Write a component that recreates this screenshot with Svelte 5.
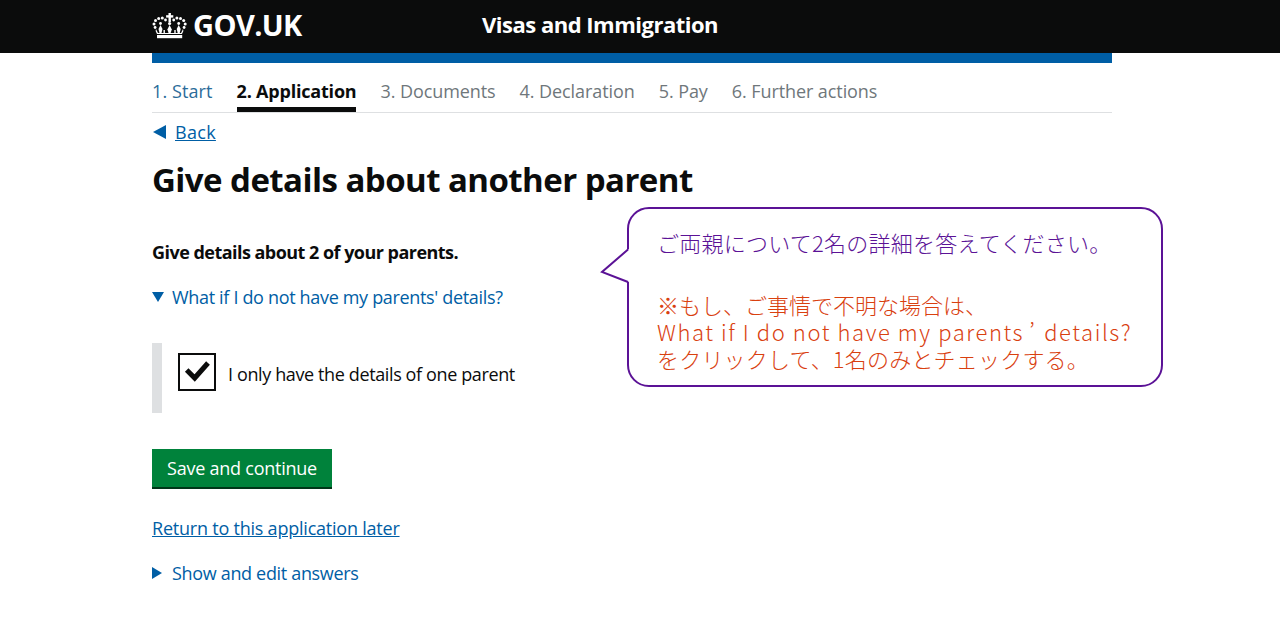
<script>
  const steps = [
    { label: '1. Start', state: 'done' },
    { label: '2. Application', state: 'current' },
    { label: '3. Documents', state: 'todo' },
    { label: '4. Declaration', state: 'todo' },
    { label: '5. Pay', state: 'todo' },
    { label: '6. Further actions', state: 'todo' }
  ];
</script>

<header class="topbar">
  <div class="wrap top-inner">
    <div class="logo">
      <svg class="crown" viewBox="0 0 34 26" width="35" height="26" aria-hidden="true">
        <g fill="#fff">
          <rect x="16" y="0" width="2.4" height="9"/>
          <rect x="13.6" y="2.2" width="7.2" height="2.4"/>
          <circle cx="1.5" cy="11" r="1.5"/>
          <circle cx="3" cy="7.6" r="1.5"/>
          <circle cx="6.2" cy="5.4" r="1.5"/>
          <circle cx="9.8" cy="5" r="1.5"/>
          <circle cx="13" cy="7" r="1.4"/>
          <circle cx="21.2" cy="7" r="1.4"/>
          <circle cx="24.4" cy="5" r="1.5"/>
          <circle cx="28" cy="5.4" r="1.5"/>
          <circle cx="31.2" cy="7.6" r="1.5"/>
          <circle cx="32.7" cy="11" r="1.5"/>
          <circle cx="2.6" cy="14.5" r="1.4"/>
          <circle cx="31.6" cy="14.5" r="1.4"/>
          <circle cx="17.1" cy="10.5" r="1.6"/>
          <circle cx="8" cy="10.5" r="1.4"/>
          <circle cx="26.2" cy="10.5" r="1.4"/>
          <path d="M17.1 12l2.2 4.5-1.2 3.5h-2l-1.2-3.5z"/>
          <path d="M8 12l2 4-1 4H7l-1-4z"/>
          <path d="M26.2 12l2 4-1 4h-2l-1-4z"/>
          <path d="M3.5 16l2 4h23l2-4 .4 2-1.4 3H4.5l-1.4-3z"/>
          <path d="M11 17h1.4v3H11zM21.8 17h1.4v3h-1.4z"/>
          <rect x="4.5" y="22" width="25.2" height="3.2"/>
        </g>
      </svg>
      <span>GOV.UK</span>
    </div>
    <div class="service">Visas and Immigration</div>
  </div>
</header>

<main class="wrap">
  <div class="blue"></div>
  <nav class="steps">
    {#each steps as s}
      <span class="step {s.state}">{s.label}</span>
    {/each}
  </nav>
  <a class="back" href="#b"><i class="tri-left"></i><span>Back</span></a>
  <h1>Give details about another parent</h1>
  <p class="intro">Give details about 2 of your parents.</p>
  <div class="details"><i class="tri-down"></i><span>What if I do not have my parents' details?</span></div>
  <div class="inset">
    <span class="box">
      <svg viewBox="0 0 38 38" width="38" height="38" aria-hidden="true">
        <path d="M8.7 17l8 8L30 10" fill="none" stroke="#0b0c0c" stroke-width="5"/>
      </svg>
    </span>
    <span class="cb-label">I only have the details of one parent</span>
  </div>
  <button class="save" type="button">Save and continue</button>
  <a class="later" href="#l">Return to this application later</a>
  <div class="show"><i class="tri-right"></i><span>Show and edit answers</span></div>
</main>

<aside class="callout" lang="ja">
  <svg class="tail" viewBox="0 0 30 42" width="30" height="42" aria-hidden="true">
    <path d="M28 0L1 23l27 10z" fill="#fff" stroke="none"/>
    <path d="M27 0.5L1 23l26 10" fill="none" stroke="#5b1296" stroke-width="2"/>
  </svg>
  <p class="purple">ご両親について2名の詳細を答えてください。</p>
  <p class="orange">※もし、ご事情で不明な場合は、<br><span class="latin">What if I do not have my parents<span class="apos">’</span>details?</span><br><span class="last">をクリックして、1名のみとチェックする。</span></p>
</aside>

<style>
  :global(body) {
    margin: 0;
    background: #fff;
    font-family: "Open Sans", "Noto Sans", sans-serif;
    color: #0b0c0c;
  }
  .wrap { width: 960px; margin: 0 0 0 152px; }
  .topbar { background: #0b0c0c; height: 53px; color: #fff; }
  .top-inner { display: flex; align-items: center; height: 53px; }
  .logo { display: flex; align-items: center; gap: 6px; width: 330px; font: 700 29px/1 "Open Sans", sans-serif; letter-spacing: -0.6px; }
  .logo span { margin-bottom: 5px; }
  .crown { flex: none; margin-bottom: 2px; }
  .service { font: 700 22px/1 "Open Sans", sans-serif; letter-spacing: -0.5px; margin-bottom: 5px; }
  .blue { height: 10px; background: #005ea5; }
  .steps { display: flex; gap: 24px; height: 49px; border-bottom: 1px solid #dee0e2; font-size: 18px; }
  .step { line-height: 56px; height: 49px; box-sizing: border-box; letter-spacing: -0.08px; }
  .step.done { color: #2b6c99; letter-spacing: 0.1px; }
  .step.todo { color: #6f777b; }
  .step.current { font-weight: 700; border-bottom: 5px solid #0b0c0c; letter-spacing: -0.2px; }
  a { color: #005ea5; }
  .back { display: flex; align-items: center; gap: 9px; margin: 6px 0 0 1px; height: 26px; font-size: 18px; text-decoration: none; letter-spacing: 0.3px; }
  .back span { text-decoration: underline; }
  .tri-left { width: 0; height: 0; border: 7px solid transparent; border-left: 0; border-right: 13px solid #005ea5; }
  .tri-down { width: 0; height: 0; border: 6px solid transparent; border-bottom: 0; border-top: 10px solid #005ea5; }
  .tri-right { width: 0; height: 0; border: 6px solid transparent; border-right: 0; border-left: 10px solid #005ea5; }
  h1 { margin: 15px 0 0; font-size: 33px; line-height: 40px; font-weight: 700; letter-spacing: -0.55px; }
  .intro { margin: 40px 0 0; font-size: 18px; line-height: 24px; font-weight: 700; letter-spacing: -0.53px; }
  .details, .show { display: flex; align-items: center; color: #005ea5; font-size: 18px; line-height: 24px; letter-spacing: -0.33px; }
  .details { margin-top: 21px; gap: 8px; }
  .show { margin-top: 21px; gap: 10px; }
  .inset { display: flex; align-items: flex-start; margin-top: 34px; height: 70px; border-left: 10px solid #dee0e2; padding: 10px 0 0 16px; box-sizing: border-box; }
  .box { width: 38px; height: 38px; box-sizing: border-box; border: 2px solid #0b0c0c; display: flex; align-items: center; justify-content: center; flex: none; }
  .box svg { flex: none; }
  .cb-label { margin-left: 12px; font-size: 18px; line-height: 42px; letter-spacing: -0.38px; }
  .save { display: block; margin-top: 36px; width: 180px; height: 40px; padding: 0; background: #00823b; color: #fff; border: 0; border-bottom: 2px solid #003618; font: 400 18px/1 "Open Sans", sans-serif; letter-spacing: -0.24px; }
  .later { display: block; margin-top: 27px; font-size: 18px; line-height: 24px; letter-spacing: -0.22px; }
  .callout {
    position: absolute; left: 627px; top: 207px; width: 536px; height: 180px;
    box-sizing: border-box; border: 2px solid #5b1296; border-radius: 22px; background: #fff;
    padding: 20px 0 0 28px; font-family: "Noto Sans CJK JP", sans-serif; font-size: 22px; font-weight: 300;
  }
  .callout p { margin: 0; line-height: 27px; }
  .tail { position: absolute; left: -28px; top: 40px; overflow: visible; }
  .purple { color: #5b1296; letter-spacing: 0.25px; }
  .orange { color: #d9400f; margin-top: 35px !important; }
  .latin { letter-spacing: 1.58px; }
  .last { letter-spacing: 0.2px; }
  .apos { padding: 0 8px 0 5px; }
</style>
